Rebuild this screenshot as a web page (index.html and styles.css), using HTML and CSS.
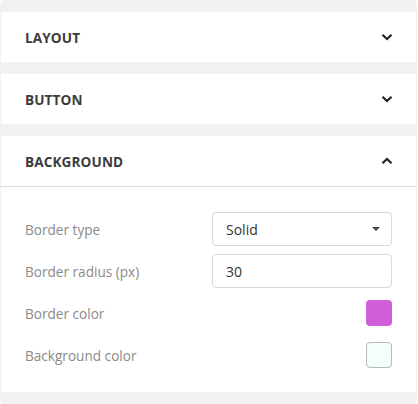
FILE: index.html
```html
<!DOCTYPE html>
<html>
<head>
<meta charset="utf-8">
<link rel="stylesheet" href="styles.css">
</head>
<body>
<div class="wrap">
  <section class="panel">
    <div class="panel-head">
      <span class="panel-title">LAYOUT</span>
      <svg class="chev" width="12" height="8" viewBox="0 0 12 8"><path d="M1.5 1.8 L6 6 L10.5 1.8" fill="none" stroke="#222" stroke-width="2.2"/></svg>
    </div>
  </section>
  <section class="panel">
    <div class="panel-head">
      <span class="panel-title">BUTTON</span>
      <svg class="chev" width="12" height="8" viewBox="0 0 12 8"><path d="M1.5 1.8 L6 6 L10.5 1.8" fill="none" stroke="#222" stroke-width="2.2"/></svg>
    </div>
  </section>
  <section class="panel open">
    <div class="panel-head">
      <span class="panel-title">BACKGROUND</span>
      <svg class="chev" width="12" height="8" viewBox="0 0 12 8"><path d="M1.5 6.2 L6 2 L10.5 6.2" fill="none" stroke="#222" stroke-width="2.2"/></svg>
    </div>
    <div class="panel-body">
      <div class="row">
        <span class="label">Border type</span>
        <div class="field select"><span>Solid</span><svg width="8" height="4" viewBox="0 0 8 4"><path d="M0 0 H8 L4 4 Z" fill="#444"/></svg></div>
      </div>
      <div class="row">
        <span class="label">Border radius (px)</span>
        <div class="field"><span>30</span></div>
      </div>
      <div class="row">
        <span class="label">Border color</span>
        <span class="swatch magenta"></span>
      </div>
      <div class="row">
        <span class="label">Background color</span>
        <span class="swatch mint"></span>
      </div>
    </div>
  </section>
</div>
</body>
</html>
```
FILE: styles.css
```css
html, body { margin: 0; padding: 0; background: #fff; }
body { font-family: "Open Sans", "Liberation Sans", sans-serif; width: 418px; height: 404px; }
.wrap {
  width: 417px;
  height: 404px;
  box-sizing: border-box;
  background: #f1f1f1;
  border-radius: 5px;
  padding: 12px 1px;
  display: flex;
  flex-direction: column;
  gap: 12px;
}
.panel { background: #fff; }
.panel-head {
  height: 50px;
  display: flex;
  align-items: center;
  justify-content: space-between;
  padding: 0 24px 0 24px;
}
.panel.open .panel-head { border-bottom: 1px solid #dcdcdc; }
.panel-title {
  font-size: 13.6px;
  font-weight: 700;
  color: #3c3c3c;
  letter-spacing: 0.1px;
}
.chev { display: block; margin-right: -1px; }
.panel-body {
  padding: 25px 24px 20px 24px;
  display: flex;
  flex-direction: column;
  gap: 8px;
}
.row {
  height: 34px;
  display: flex;
  align-items: center;
  justify-content: space-between;
}
.label { font-size: 13.6px; color: #8a8a8a; }
.field {
  width: 180px;
  height: 34px;
  box-sizing: border-box;
  border: 1px solid #d9d9d9;
  border-radius: 4px;
  display: flex;
  align-items: center;
  justify-content: space-between;
  padding: 0 11px 0 13px;
  font-size: 14px;
  color: #333;
}
.select svg { display: block; }
.swatch {
  width: 26px;
  height: 26px;
  box-sizing: border-box;
  border-radius: 4px;
}
.magenta { background: #d05ed8; }
.mint { background: #f3fffa; border: 1px solid #b9b9b9; }
```
